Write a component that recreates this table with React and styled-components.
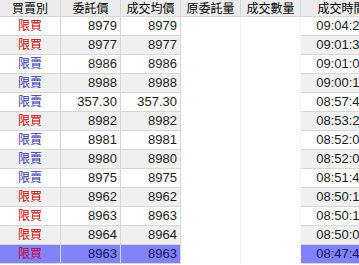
import React from "react";
import styled, { createGlobalStyle } from "styled-components";

const GlobalStyle = createGlobalStyle`
  html, body {
    margin: 0;
    padding: 0;
    background: #ffffff;
    overflow: hidden;
  }
  * {
    box-sizing: border-box;
  }
`;

const Grid = styled.div`
  width: 359px;
  height: 265px;
  overflow: hidden;
  font-family: "Liberation Sans", "Noto Sans CJK TC", sans-serif;
  font-size: 13px;
  color: #1c1c1c;
`;

const HeaderRow = styled.div`
  display: flex;
  height: 17px;
  background: #ececec;
  border-bottom: 1px solid #d6d6d6;
  white-space: nowrap;
`;

const HeaderCell = styled.div`
  flex: 0 0 ${(p) => p.$w}px;
  height: 16px;
  line-height: 18px;
  text-align: center;
  font-size: 12px;
  color: #000;
  border-right: 1px solid #d6d6d6;
  overflow: hidden;
`;

const Row = styled.div`
  display: flex;
  height: 19px;
  white-space: nowrap;
`;

const Cell = styled.div`
  flex: 0 0 ${(p) => p.$w}px;
  height: 19px;
  line-height: 18px;
  padding: 0 3px;
  text-align: ${(p) => p.$align || "left"};
  background: ${(p) => (p.$blank ? "#ffffff" : p.$selected ? "#8282fa" : p.$odd ? "#f0f0f0" : "#ffffff")};
  border-right: 1px solid ${(p) => (p.$blank ? "#f4f4f4" : "#d6d6d6")};
  border-bottom: 1px solid ${(p) => (p.$blank ? "#ffffff" : "#d6d6d6")};
  overflow: hidden;
`;

const Side = styled.span`
  font-size: 12px;
  color: ${(p) => (p.$selected ? "#c4003c" : p.$buy ? "#c80000" : "#3434a8")};
`;

const Num = styled.span`
  color: ${(p) => (p.$selected ? "#14145a" : "#1c1c1c")};
`;

const cols = [61, 60, 60, 60, 60, 82];
const headers = ["買賣別", "委託價", "成交均價", "原委託量", "成交數量", "成交時間"];

const trades = [
  { buy: true, price: "8979", avg: "8979", time: "09:04:21" },
  { buy: true, price: "8977", avg: "8977", time: "09:01:34" },
  { buy: false, price: "8986", avg: "8986", time: "09:01:05" },
  { buy: false, price: "8988", avg: "8988", time: "09:00:12" },
  { buy: false, price: "357.30", avg: "357.30", time: "08:57:45" },
  { buy: true, price: "8982", avg: "8982", time: "08:53:22" },
  { buy: false, price: "8981", avg: "8981", time: "08:52:08" },
  { buy: false, price: "8980", avg: "8980", time: "08:52:01" },
  { buy: false, price: "8975", avg: "8975", time: "08:51:43" },
  { buy: true, price: "8962", avg: "8962", time: "08:50:15" },
  { buy: true, price: "8963", avg: "8963", time: "08:50:14" },
  { buy: true, price: "8964", avg: "8964", time: "08:50:06" },
  { buy: true, price: "8963", avg: "8963", time: "08:47:48" },
];

const App = () => {
  return (
    <>
      <GlobalStyle />
      <Grid>
        <HeaderRow>
          {headers.map((h, i) => (
            <HeaderCell key={h} $w={cols[i]}>
              {h}
            </HeaderCell>
          ))}
        </HeaderRow>
        {trades.map((t, i) => {
          const sel = i === trades.length - 1;
          const odd = i % 2 === 1;
          return (
            <Row key={i}>
              <Cell $w={cols[0]} $align="center" $odd={odd} $selected={sel}>
                <Side $buy={t.buy} $selected={sel}>
                  {t.buy ? "限買" : "限賣"}
                </Side>
              </Cell>
              <Cell $w={cols[1]} $align="right" $odd={odd} $selected={sel}>
                <Num $selected={sel}>{t.price}</Num>
              </Cell>
              <Cell $w={cols[2]} $align="right" $odd={odd} $selected={sel}>
                <Num $selected={sel}>{t.avg}</Num>
              </Cell>
              <Cell $w={cols[3]} $blank />
              <Cell $w={cols[4]} $blank />
              <Cell $w={cols[5]} $align="center" $odd={odd} $selected={sel}>
                <Num $selected={sel}>{t.time}</Num>
              </Cell>
            </Row>
          );
        })}
      </Grid>
    </>
  );
};

export default App;
